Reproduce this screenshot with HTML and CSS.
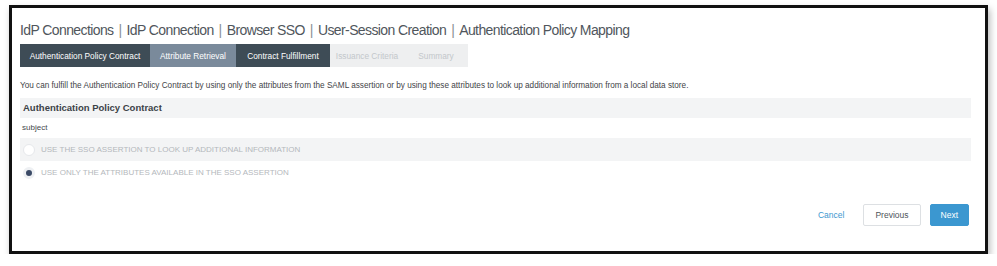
FILE: index.html
```html
<!DOCTYPE html>
<html>
<head>
    <title>Authentication Policy Mapping</title>
    <link rel="stylesheet" href="styles.css">
</head>
<body>
    <div class="frame">
        <h1 class="crumbs">IdP Connections<span class="sep">|</span>IdP Connection<span class="sep">|</span>Browser SSO<span class="sep">|</span>User-Session Creation<span class="sep">|</span>Authentication Policy Mapping</h1>

        <div class="tabs">
            <div class="tab done">Authentication Policy Contract</div>
            <div class="tab visited">Attribute Retrieval</div>
            <div class="tab done">Contract Fulfillment</div>
            <div class="tab off">Issuance Criteria</div>
            <div class="tab off">Summary</div>
        </div>

        <p class="intro">You can fulfill the Authentication Policy Contract by using only the attributes from the SAML assertion or by using these attributes to look up additional information from a local data store.</p>

        <div class="section-head">Authentication Policy Contract</div>
        <div class="field">subject</div>

        <div class="options">
            <label class="option shaded"><span class="radio"></span>Use the SSO assertion to look up additional information</label>
            <label class="option"><span class="radio on"></span>Use only the attributes available in the SSO assertion</label>
        </div>

        <div class="actions">
            <a class="cancel">Cancel</a>
            <button class="btn">Previous</button>
            <button class="btn primary">Next</button>
        </div>
    </div>
</body>
</html>
```

FILE: styles.css
```css
body {
    margin: 0;
    background: #fff;
    font-family: 'Liberation Sans', Arial, sans-serif;
}

.frame {
    box-sizing: border-box;
    margin: 5px 0 0 9px;
    width: 979px;
    height: 249px;
    border: 3px solid #111;
    box-shadow: 2px 4px 7px rgba(0, 0, 0, 0.28);
    padding: 13px 14px 0 8px;
    display: flex;
    flex-direction: column;
}

.crumbs {
    margin: 0;
    font-size: 14px;
    line-height: 18px;
    font-weight: normal;
    letter-spacing: -0.6px;
    color: #50565c;
}

.crumbs .sep {
    color: #8a8f94;
    margin: 0 5px;
}

.tabs {
    display: flex;
    margin-top: 5px;
    height: 23px;
}

.tab {
    display: flex;
    align-items: center;
    justify-content: center;
    font-size: 8.3px;
    color: #fff;
}

.tab:nth-child(1) { width: 130px; }
.tab:nth-child(2) { width: 86px; }
.tab:nth-child(3) { width: 94px; }
.tab:nth-child(4) { width: 74px; }
.tab:nth-child(5) { width: 64px; }

.tab.done {
    background-color: #3e4c56;
}

.tab.visited {
    background-color: #7a8a9b;
}

.tab.off {
    background-color: #eeeff0;
    color: #c3c7cb;
}

.intro {
    margin: 13px 0 0 0;
    font-size: 8.2px;
    line-height: 12px;
    color: #3f4448;
}

.section-head {
    margin-top: 6px;
    height: 20px;
    line-height: 20px;
    padding-left: 3px;
    background-color: #f3f4f5;
    font-size: 9.5px;
    font-weight: bold;
    color: #3c4247;
}

.field {
    margin-top: 4px;
    padding-left: 2px;
    font-size: 8px;
    line-height: 12px;
    color: #45494d;
}

.options {
    margin-top: 4px;
    display: flex;
    flex-direction: column;
}

.option {
    display: flex;
    align-items: center;
    gap: 6px;
    height: 23px;
    padding-left: 3px;
    font-size: 8px;
    text-transform: uppercase;
    color: #b4b8bc;
}

.option.shaded {
    background-color: #f3f4f5;
}

.radio {
    box-sizing: border-box;
    width: 12px;
    height: 12px;
    border-radius: 50%;
    background: #fff;
    border: 1px solid #e6e8eb;
}

.radio.on {
    border: 3px solid #eef0f3;
    background: #3b4a66;
}

.actions {
    margin-top: 20px;
    display: flex;
    justify-content: flex-end;
    align-items: center;
    gap: 9px;
    padding-right: 2px;
}

.cancel {
    font-size: 8.5px;
    color: #3d98cf;
    margin-right: 10px;
}

.btn {
    height: 22px;
    border-radius: 2px;
    font-family: inherit;
    font-size: 8.5px;
    padding: 0 11px;
    border: 1px solid #dde0e3;
    background: #fff;
    color: #4d5359;
}

.btn.primary {
    background: #3b97d0;
    border-color: #3b97d0;
    color: #fff;
    padding: 0 10px;
}
```
